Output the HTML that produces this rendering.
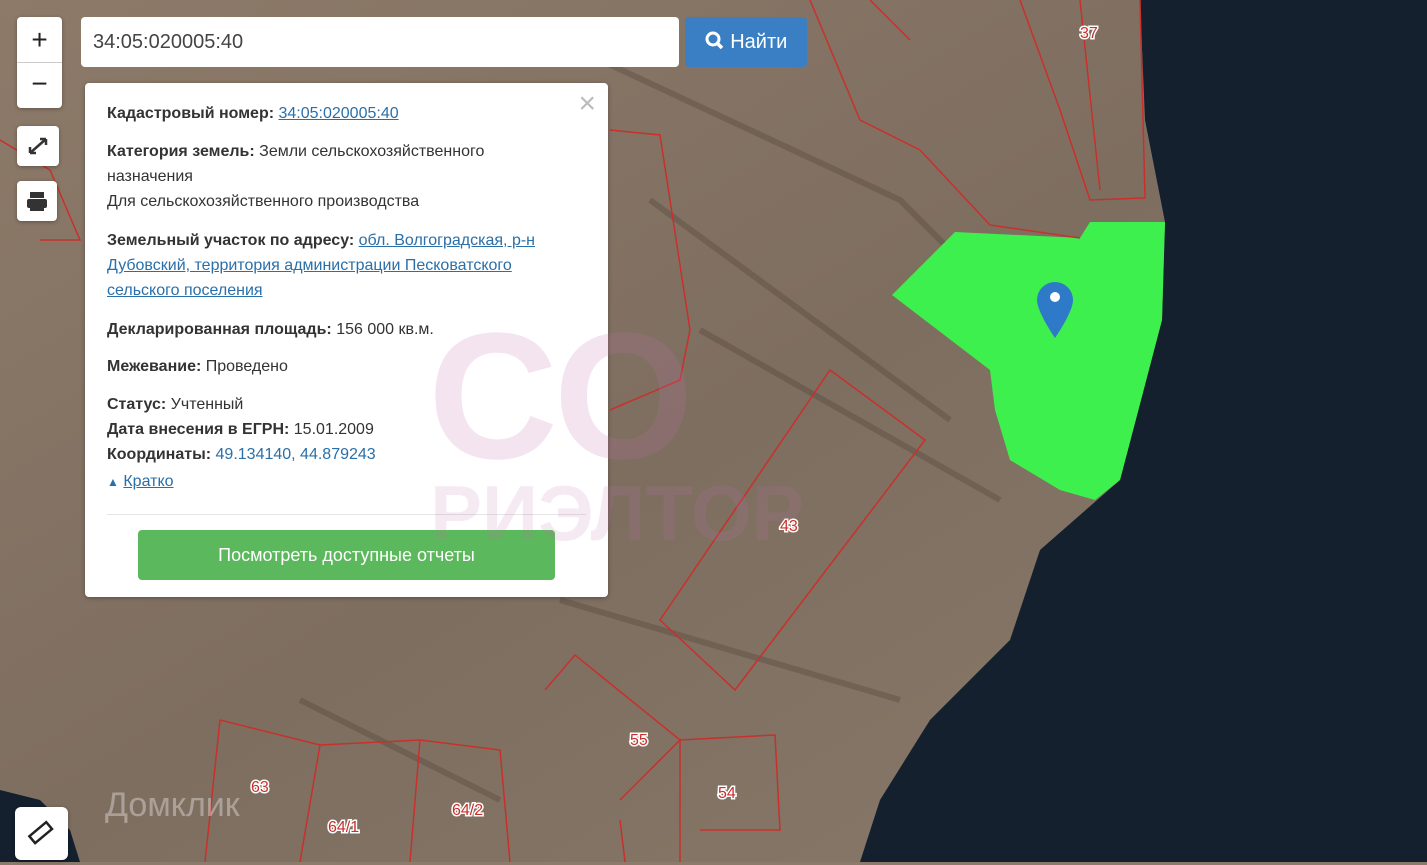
<!DOCTYPE html>
<html><head><meta charset="utf-8"><style>
body{margin:0;width:1427px;height:862px;overflow:hidden;position:relative;font-family:"Liberation Sans",Arial,sans-serif;background:#8c7b6b}
svg.map{position:absolute;left:0;top:0}
.btn{position:absolute;background:#fff;border-radius:4px;box-shadow:0 1px 4px rgba(0,0,0,.3)}
.panel{position:absolute;left:85px;top:83px;width:523px;height:514px;background:#fff;border-radius:4px;box-shadow:0 1px 5px rgba(0,0,0,.3);font-size:16px;color:#333;line-height:25px}
.panel b{font-weight:bold}
.panel a{color:#2a6fa8;text-decoration:underline}
.p{position:absolute;left:22px;width:450px}
.lbl{font-size:16px;fill:#c9302c;stroke:#fff;stroke-width:3;paint-order:stroke;font-family:"Liberation Sans"}
</style></head><body>
<svg class="map" width="1427" height="862">
<defs><linearGradient id="g" x1="0" y1="0" x2="1" y2="1"><stop offset="0" stop-color="#8d7a69"/><stop offset=".5" stop-color="#7e6e60"/><stop offset="1" stop-color="#8a7a6a"/></linearGradient></defs>
<rect width="1427" height="862" fill="url(#g)"/>
<path d="M600 60 L900 200 L1000 300 M650 200 L950 420 M700 330 L1000 500 M560 600 L900 700 M300 700 L500 800" stroke="#4a3c33" stroke-width="6" fill="none" opacity=".3"/>
<path d="M1140 0 L1145 120 L1165 222 L1162 320 L1120 480 L1040 550 L1010 640 L930 720 L880 800 L860 862 L1427 862 L1427 0Z" fill="#14202e"/>
<path d="M0 790 L40 800 L70 830 L80 862 L0 862Z" fill="#14202e"/>
<path d="M892 295 L955 232 L1080 238 L1090 222 L1165 222 L1162 320 L1120 480 L1095 500 L1060 490 L1010 460 L995 410 L990 370 Z" fill="#3ef04e"/>
<g stroke="#c9302c" stroke-width="1.5" fill="none">
<path d="M1020 0 L1060 110 L1090 200 L1145 198 L1140 0"/>
<path d="M1080 0 L1100 190"/>
<path d="M810 0 L860 120 L920 150 L990 225 L1080 238"/>
<path d="M610 130 L660 135 L690 330 L680 380 L610 410"/>
<path d="M830 370 L925 440 L735 690 L660 620 Z"/>
<path d="M545 690 L575 655 L680 740 L775 735 L780 830 L700 830"/>
<path d="M220 720 L320 745 L420 740 L500 750 L510 862"/>
<path d="M220 720 L205 862 M320 745 L300 862 M420 740 L410 862 M620 820 L625 862 M620 800 L680 740 L680 862"/>
<path d="M0 140 L50 170 L80 240 L40 240"/>
<path d="M870 0 L910 40"/>
</g>
<text class="lbl" x="1080" y="38">37</text><text class="lbl" x="780" y="531">43</text><text class="lbl" x="630" y="745">55</text><text class="lbl" x="718" y="798">54</text><text class="lbl" x="251" y="792">63</text><text class="lbl" x="328" y="832">64/1</text><text class="lbl" x="452" y="815">64/2</text>
<text x="105" y="816" font-size="34" fill="#fff" opacity=".35">Домклик</text>
<path d="M1055 282 a18 18 0 0 1 18 18 c0 12 -18 38 -18 38 c0 0 -18 -26 -18 -38 a18 18 0 0 1 18 -18z" fill="#2f79c9"/>
<circle cx="1055" cy="297" r="5" fill="#fff"/>
</svg>
<div class="btn" style="left:17px;top:17px;width:45px;height:91px"><div style="position:absolute;top:0;width:45px;height:45px;text-align:center;font-size:28px;line-height:45px;color:#222;border-bottom:1px solid #ccc">+</div><div style="position:absolute;top:46px;width:45px;height:45px;text-align:center;font-size:28px;line-height:42px;color:#222">−</div></div>
<div class="btn" style="left:17px;top:126px;width:42px;height:40px"><svg width="42" height="40"><path d="M13 27 L29 13 M29 13 h-6 M29 13 v6 M13 27 h6 M13 27 v-6" stroke="#333" stroke-width="2.5" fill="none"/></svg></div>
<div class="btn" style="left:17px;top:181px;width:40px;height:40px"><svg width="40" height="40"><rect x="13" y="11" width="14" height="6" fill="#333"/><rect x="10" y="18" width="20" height="9" rx="2" fill="#333"/><rect x="13" y="24" width="14" height="6" fill="#333"/></svg></div>
<div class="btn" style="left:15px;top:807px;width:53px;height:53px;border-radius:6px"><svg width="53" height="53"><g transform="rotate(-40 26 26)"><rect x="15" y="21" width="22" height="9" fill="none" stroke="#222" stroke-width="2.5"/></g></svg></div>
<div style="position:absolute;left:81px;top:17px;width:598px;height:50px;background:#fff;border-radius:4px;font-size:20px;line-height:50px;padding-left:12px;box-sizing:border-box;color:#444">34:05:020005:40</div>
<div style="position:absolute;left:685px;top:17px;width:122px;height:50px;background:#3a7fc4;border-radius:4px;color:#fff;font-size:20px;line-height:50px;text-align:center"><svg width="20" height="20" style="vertical-align:-3px"><circle cx="8" cy="8" r="6" stroke="#fff" stroke-width="3" fill="none"/><path d="M12 12 L17 17" stroke="#fff" stroke-width="3.5"/></svg> Найти</div>
<div class="panel">
<div style="position:absolute;right:12px;top:6px;font-size:30px;color:#bbb;line-height:30px">×</div>
<div class="p" style="top:18px"><b>Кадастровый номер:</b> <a>34:05:020005:40</a></div>
<div class="p" style="top:56px;width:440px"><b>Категория земель:</b> Земли сельскохозяйственного назначения<br>Для сельскохозяйственного производства</div>
<div class="p" style="top:145px;width:475px"><b>Земельный участок по адресу:</b> <a>обл. Волгоградская, р-н Дубовский, территория администрации Песковатского сельского поселения</a></div>
<div class="p" style="top:234px"><b>Декларированная площадь:</b> 156 000 кв.м.</div>
<div class="p" style="top:271px"><b>Межевание:</b> Проведено</div>
<div class="p" style="top:309px"><b>Статус:</b> Учтенный<br><b>Дата внесения в ЕГРН:</b> 15.01.2009<br><b>Координаты:</b> <span style="color:#2a6fa8">49.134140, 44.879243</span></div>
<div class="p" style="top:386px;color:#2a6fa8"><span style="font-size:12px">▲</span> <span style="text-decoration:underline">Кратко</span></div>
<div style="position:absolute;left:22px;right:22px;top:431px;border-top:1px solid #e5e5e5"></div>
<div style="position:absolute;left:53px;top:447px;width:417px;height:50px;background:#5cb85c;border-radius:4px;color:#fff;font-size:18px;line-height:50px;text-align:center">Посмотреть доступные отчеты</div>
</div>
<svg style="position:absolute;left:0;top:0;pointer-events:none" width="1427" height="862">
<text x="428" y="458" font-size="180" font-weight="bold" fill="#c070b0" opacity=".18">СО</text>
<text x="430" y="540" font-size="78" font-weight="bold" fill="#c070b0" opacity=".15">РИЭЛТОР</text>
</svg>
</body></html>
